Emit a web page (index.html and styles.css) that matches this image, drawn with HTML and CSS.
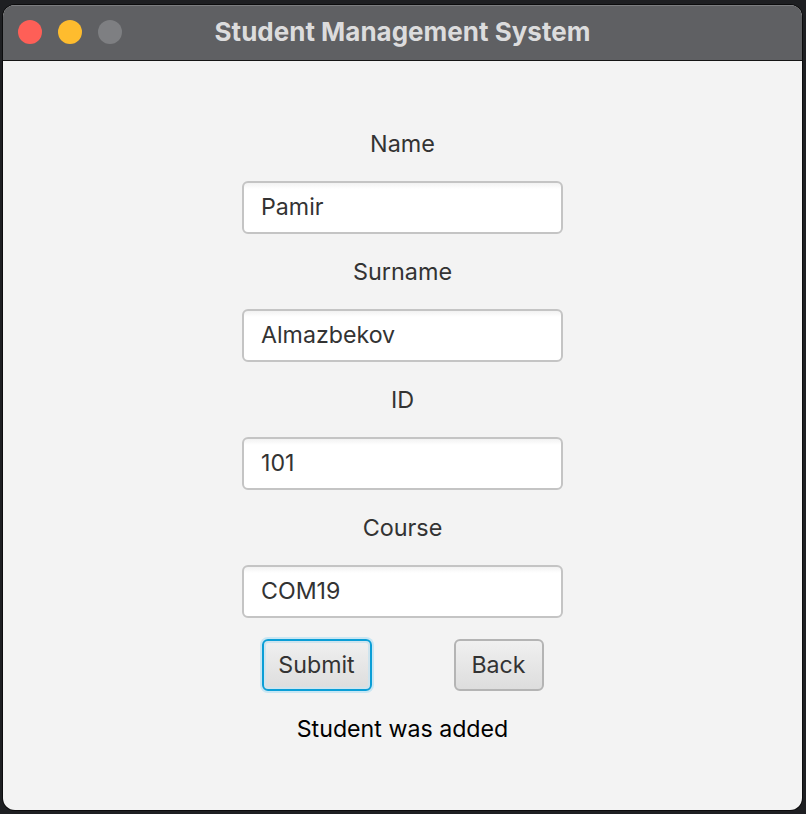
FILE: index.html
```html
<!DOCTYPE html>
<html>
<head>
<meta charset="utf-8">
<title>Student Management System</title>
<link rel="stylesheet" href="styles.css">
</head>
<body>
<div class="window">
  <div class="titlebar">
    <div class="lights">
      <span class="light red"></span>
      <span class="light yellow"></span>
      <span class="light gray"></span>
    </div>
    <div class="title">Student Management System</div>
  </div>
  <div class="content">
    <div class="label">Name</div>
    <div class="field">Pamir</div>
    <div class="label">Surname</div>
    <div class="field">Almazbekov</div>
    <div class="label">ID</div>
    <div class="field">101</div>
    <div class="label">Course</div>
    <div class="field">COM19</div>
    <div class="buttons">
      <div class="btn submit">Submit</div>
      <div class="btn back">Back</div>
    </div>
    <div class="status">Student was added</div>
  </div>
</div>
</body>
</html>
```

FILE: styles.css
```css
html, body {
  margin: 0;
  padding: 0;
  background: #1e1f22;
  width: 806px;
  height: 814px;
  overflow: hidden;
}
body {
  font-family: Inter, "Liberation Sans", sans-serif;
}
.window {
  margin: 5px 0 0 3px;
  width: 799px;
  height: 805px;
  border-radius: 12px;
  overflow: hidden;
  background: #f3f3f3;
  display: flex;
  flex-direction: column;
  box-shadow: 0 0 0 1px #0c0c0d;
}
.titlebar {
  height: 56px;
  flex: none;
  background: #5f6063;
  border-top: 1px solid #7c7d80;
  border-bottom: 1px solid #151515;
  box-sizing: border-box;
  position: relative;
  display: flex;
  align-items: center;
  justify-content: center;
}
.lights {
  position: absolute;
  left: 15px;
  top: 14px;
  display: flex;
  gap: 16px;
}
.light {
  width: 24px;
  height: 24px;
  border-radius: 50%;
  display: block;
}
.red { background: #fe5f57; }
.yellow { background: #febc2e; }
.gray { background: #7e7f82; }
.title {
  color: #dcdcdd;
  font-weight: 700;
  font-size: 26px;
  margin-top: -4px;
}
.content {
  flex: 1;
  display: flex;
  flex-direction: column;
  align-items: center;
  padding-top: 57px;
  gap: 12px;
}
.label {
  height: 52px;
  line-height: 52px;
  font-size: 23.4px;
  color: #333333;
  text-align: center;
}
.field {
  width: 321px;
  height: 53px;
  box-sizing: border-box;
  border: 2px solid #c4c4c4;
  border-radius: 6px;
  background: linear-gradient(#f2f2f2 0, #ffffff 6px, #ffffff 100%);
  padding-left: 17px;
  line-height: 49px;
  font-size: 23.2px;
  color: #333333;
  margin-top: -1px;
}
.buttons {
  display: flex;
  gap: 82px;
  margin-top: 9px;
}
.btn {
  height: 52px;
  box-sizing: border-box;
  border-radius: 6px;
  font-size: 23.2px;
  color: #333333;
  display: flex;
  align-items: center;
  justify-content: center;
  background: linear-gradient(#f0f0f0, #dddddd);
}
.submit {
  width: 110px;
  border: 2px solid #0a9ed6;
  box-shadow: 0 0 0 2px #c8e6f3, inset 0 0 0 2px #cfe4ee;
}
.back {
  width: 90px;
  border: 2px solid #b4b4b4;
}
.status {
  height: 52px;
  line-height: 52px;
  font-size: 23.2px;
  color: #000000;
}
```
